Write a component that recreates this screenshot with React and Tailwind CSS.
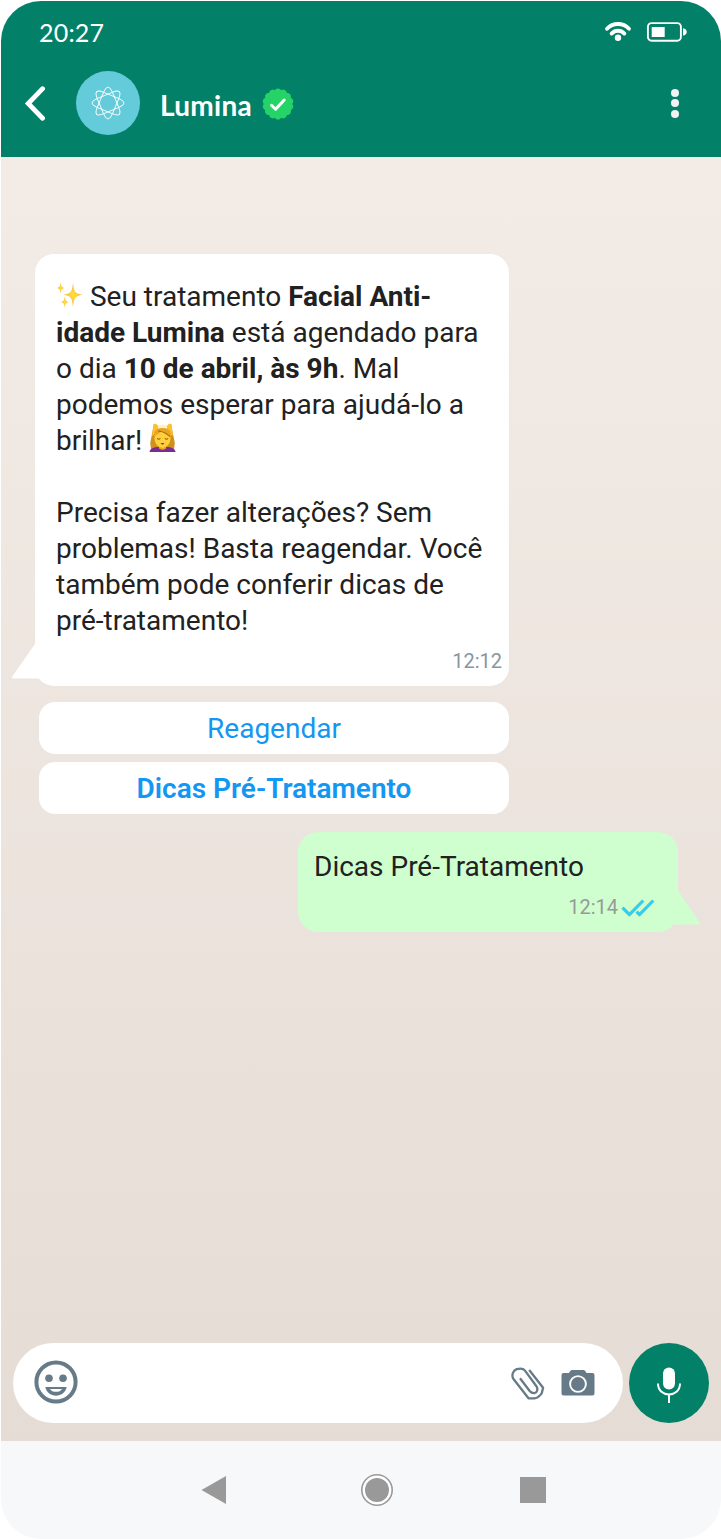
import { clsx } from 'clsx';

const HEADER_BG = 'bg-[#028068]';

const QUICK_REPLIES = [
  { label: 'Reagendar', bold: false },
  { label: 'Dicas Pré-Tratamento', bold: true },
];

function WifiIcon() {
  return (
    <svg width="28" height="22" viewBox="0 0 28 22" fill="none" aria-hidden="true">
      <path d="M3 7.800C9 1.400 19 1.400 25 7.800" stroke="white" strokeWidth="3.800" strokeLinecap="round" />
      <path d="M7.600 12.600C11.200 8.800 16.800 8.800 20.400 12.600" stroke="white" strokeWidth="3.800" strokeLinecap="round" />
      <circle cx="14" cy="16.800" r="3.200" fill="white" />
    </svg>
  );
}

function BatteryIcon() {
  return (
    <svg width="42" height="22" viewBox="0 0 42 22" fill="none" aria-hidden="true">
      <rect x="1.900" y="2.100" width="33" height="17.600" rx="3.600" stroke="white" strokeWidth="1.900" />
      <rect x="5.700" y="6" width="13" height="10" fill="white" />
      <path d="M37 7.200c5 .6 5 6.800 0 7.400z" fill="white" />
    </svg>
  );
}

function BackIcon() {
  return (
    <svg width="22" height="36" viewBox="0 0 22 36" fill="none" aria-hidden="true">
      <path d="M18.600 3.700L4.200 18.500L18.600 33.200" stroke="white" strokeWidth="4.800" strokeLinecap="round" strokeLinejoin="miter" />
    </svg>
  );
}

// one petal: rounded tip with straight sides running to the edge midpoints of an 8/3 star
function Logo() {
  return (
    <svg width="34" height="34" viewBox="-17 -17 34 34" fill="none" stroke="white" strokeWidth="0.95" aria-hidden="true">
      {Array.from({ length: 8 }, (_, i) => (
        <path
          key={i}
          d="M-7.600 -3.150L-4.600 -10.500Q0 -21.500 4.600 -10.500L7.600 -3.150"
          transform={`rotate(${i * 45})`}
        />
      ))}
    </svg>
  );
}

function VerifiedBadge() {
  return (
    <svg width="32" height="32" viewBox="-16 -16 32 32" fill="none" aria-hidden="true">
      <g fill="#25d366">
        <circle r="14.300" />
        {Array.from({ length: 14 }, (_, i) => (
          <circle key={i} cy="-12.400" r="3.100" transform={`rotate(${(i * 360) / 14})`} />
        ))}
      </g>
      <path d="M-6.500 1.300l4.100 4L6.200-4" stroke="white" strokeWidth="3" strokeLinecap="round" strokeLinejoin="round" />
    </svg>
  );
}

function SparklesEmoji() {
  return (
    <svg
      className="inline-block align-[-3px]"
      width="27"
      height="28"
      viewBox="0 0 27 28"
      role="img"
      aria-label="✨"
    >
      <defs>
        <radialGradient id="spark">
          <stop offset="0" stopColor="#ffe13a" />
          <stop offset="0.55" stopColor="#fcc93e" />
          <stop offset="1" stopColor="#f6a33c" />
        </radialGradient>
      </defs>
      <g fill="url(#spark)">
        <path d="M17 2C18 10 18.600 12.600 26.500 13.800C18.600 15 18 17.600 17 26C16 17.600 15.400 15 7.500 13.800C15.400 12.600 16 10 17 2Z" />
        <path d="M4.600 1C5 5 5.600 6.300 8.500 7C5.600 7.700 5 9 4.600 13C4.200 9 3.600 7.700 .8 7C3.600 6.300 4.200 5 4.600 1Z" />
        <path d="M8.700 15C9.100 19 9.700 20.400 12.600 21C9.700 21.700 9.100 23 8.700 27C8.300 23 7.700 21.700 4.800 21C7.700 20.400 8.300 19 8.700 15Z" />
      </g>
    </svg>
  );
}

function MassageEmoji() {
  return (
    <svg
      className="inline-block align-[-2px]"
      width="27"
      height="29"
      viewBox="0 0 27 29"
      role="img"
      aria-label="💆"
    >
      <path d="M5 1L9 7H18L22 1L25.800 20L25 26H2L1.200 20Z" fill="#d0911c" />
      <path d="M4.500 1C7 .3 9 1.500 9.500 5L8 10L3 13ZM22.500 1C20 .3 18 1.500 17.500 5L19 10L24 13Z" fill="#fbc02d" />
      <path d="M9 2.500Q13.500.500 18 2.500V7H9Z" fill="#fff0c4" />
      <path d="M.5 29C1 25.500 4.500 24 9.500 24H17.500C22.500 24 26 25.500 26.500 29Z" fill="#7b2c8f" />
      <path d="M10 22H17V25.500Q13.500 28 10 25.500Z" fill="#e8a91f" />
      <ellipse cx="13.500" cy="15.500" rx="8" ry="9.200" fill="#ffcf3d" />
      <path d="M5 14C4.500 7 9 4.500 13.500 5C19 4.500 23 8 22 15C20 13.500 16 11.500 13 7.500C11.500 10.500 7 11 5 14Z" fill="#e9a520" />
      <path d="M9 8C13 8 18 10.500 21 13.500" stroke="#8a5a12" strokeWidth="0.900" fill="none" />
      <path d="M8 15.500Q9.700 17 11.400 15.500M15.800 15.500Q17.500 17 19.200 15.500" stroke="#7a4c10" strokeWidth="1" fill="none" />
      <path d="M11.500 20.500Q13.500 19.300 15.500 20.500Q13.500 22.700 11.500 20.500Z" fill="#7a3408" />
    </svg>
  );
}

function DoubleCheck() {
  return (
    <svg width="34" height="18" viewBox="0 0 34 18" fill="none" stroke="#34cdec" strokeWidth="3.200" aria-hidden="true">
      <path d="M1.500 8.700L8.400 15.700L22.300 1.500" strokeLinejoin="round" />
      <path d="M15.600 12.700L18.500 15.700L32.300 1.500" strokeLinejoin="round" />
    </svg>
  );
}

function SmileIcon() {
  return (
    <svg className="-mt-[3px]" width="44" height="44" viewBox="0 0 44 44" fill="none" aria-hidden="true">
      <circle cx="22" cy="22" r="19.600" stroke="#667a87" strokeWidth="4" />
      <circle cx="15" cy="18.300" r="3.800" fill="#667a87" />
      <circle cx="29" cy="18.300" r="3.800" fill="#667a87" />
      <path d="M11.300 27H32.700C30.500 38.500 13.500 38.500 11.300 27ZM16 29C18 32.800 26 32.800 28 29Z" fill="#667a87" fillRule="evenodd" />
    </svg>
  );
}

function ClipIcon() {
  return (
    <svg width="34" height="34" viewBox="0 0 34 34" fill="none" stroke="#667a87" strokeWidth="2.300" strokeLinejoin="round" aria-hidden="true">
      <path d="M18.200 4L32.100 21.800L30.700 27.400Q27 32.300 23.500 32.300H17.500L2.300 12.700C.3 9 2 4.500 5.700 3.200C9 2.300 12.200 2.300 14 4.600L25.400 20.200C27.200 23 26.300 26.600 23.500 27.100C21.300 27.300 20 26.600 18.700 25L9 12.300" />
    </svg>
  );
}

function CameraIcon() {
  return (
    <svg width="34" height="28" viewBox="0 0 34 28" fill="none" aria-hidden="true">
      <path d="M2.500 4H8C9 1.500 10.500 1 12 1H21.500C23 1 24.500 1.500 25.500 4H31.500Q33.500 4 33.500 6V24.500Q33.500 26.500 31.500 26.500H2.500Q.5 26.500 .5 24.500V6Q.5 4 2.500 4Z" fill="#667a87" />
      <circle cx="17" cy="15" r="7.900" stroke="white" strokeWidth="1.900" />
    </svg>
  );
}

function MicIcon() {
  return (
    <svg className="mt-1 mr-px" width="26" height="38" viewBox="0 0 26 38" fill="none" aria-hidden="true">
      <rect x="7" y="1.500" width="12" height="22" rx="6" fill="white" />
      <path d="M2 17.500C2 32 24 32 24 17.500M13 28V37" stroke="white" strokeWidth="2" />
    </svg>
  );
}

function Header() {
  return (
    <header className={clsx('h-[156px] shrink-0 text-white', HEADER_BG)}>
      <div className="flex h-[62px] items-center justify-between pl-[38px] pr-[33px]">
        <span className="font-['Lato'] text-[25px] leading-8 tracking-[0.2px]">20:27</span>
        <div className="flex items-center gap-[14px]">
          <WifiIcon />
          <BatteryIcon />
        </div>
      </div>
      <div className="-mt-px flex h-[82px] items-center pl-[23px] pr-[42px]">
        <BackIcon />
        <div className="ml-[30px] flex size-16 items-center justify-center rounded-full bg-[#64cbda]">
          <Logo />
        </div>
        <h1 className="ml-5 mt-1 font-['Lato'] text-[28px] leading-9 font-bold tracking-[0.3px]">Lumina</h1>
        <div className="ml-[10px] mt-[2px]">
          <VerifiedBadge />
        </div>
        <div className="ml-auto flex flex-col gap-[2.500px]">
          <span className="size-2 rounded-full bg-[#f2f2f2]" />
          <span className="size-2 rounded-full bg-[#f2f2f2]" />
          <span className="size-2 rounded-full bg-[#f2f2f2]" />
        </div>
      </div>
    </header>
  );
}

function IncomingMessage() {
  return (
    <div className="relative ml-[34px] mt-[97px] h-[432px] w-[474px] rounded-[19px] bg-white pl-[21px] pt-[25px] text-[#212121]">
      <svg className="absolute -left-[23px] bottom-[7px]" width="32" height="35" viewBox="0 0 32 35" fill="white" aria-hidden="true">
        <path d="M23 0L.4 32.300Q-.5 34.500 2 34.500H32V0Z" />
      </svg>
      <div className="relative whitespace-nowrap text-[28px] leading-9">
        <p>
          <SparklesEmoji /> Seu tratamento <b>Facial Anti-</b>
          <br />
          <b>idade Lumina</b> está agendado para
          <br />o dia <b>10 de abril, às 9h</b>. Mal
          <br />
          podemos esperar para ajudá-lo a
          <br />
          brilhar! <MassageEmoji />
        </p>
        <p className="mt-9">
          Precisa fazer alterações? Sem
          <br />
          problemas! Basta reagendar. Você
          <br />
          também pode conferir dicas de
          <br />
          pré-tratamento!
        </p>
      </div>
      <div className="pr-[7px] pt-[10px] text-right text-[20px] leading-6 text-[#8696a0]">12:12</div>
    </div>
  );
}

function QuickReplies() {
  return (
    <div className="ml-[38px] mt-4 flex w-[470px] flex-col gap-2">
      {QUICK_REPLIES.map(({ label, bold }) => (
        <button
          key={label}
          type="button"
          className={clsx(
            'h-[52px] rounded-[16px] bg-white pt-[2px] text-[28px] leading-9 text-[#1496f3]',
            bold && 'font-semibold',
          )}
        >
          {label}
        </button>
      ))}
    </div>
  );
}

function OutgoingMessage() {
  return (
    <div className="relative ml-[297px] mt-[18px] h-[100px] w-[380px] rounded-[20px] bg-[#cffecf] pl-4 pr-[23px] pt-[17px]">
      <svg className="absolute -right-[22px] bottom-[7px]" width="32" height="35" viewBox="0 0 32 35" fill="#cffecf" aria-hidden="true">
        <path d="M9.800 0L31.600 32.300Q32.500 34.500 30 34.500H0V0Z" />
      </svg>
      <p className="relative text-[28px] leading-9 text-[#212121]">Dicas Pré-Tratamento</p>
      <div className="relative mt-[10px] flex items-center justify-end gap-[3px] text-[20px] leading-6 text-[#999]">
        12:14
        <span className="mt-[2px]">
          <DoubleCheck />
        </span>
      </div>
    </div>
  );
}

function Composer() {
  return (
    <div className="mt-auto mb-[18px] ml-3 flex h-20 gap-[6px]">
      <div className="flex w-[610px] items-center rounded-full bg-white pl-[21px] pr-7">
        <SmileIcon />
        <div className="ml-auto flex items-center gap-4">
          <ClipIcon />
          <CameraIcon />
        </div>
      </div>
      <div className={clsx('flex size-20 items-center justify-center rounded-full', HEADER_BG)}>
        <MicIcon />
      </div>
    </div>
  );
}

function NavBar() {
  return (
    <nav className="flex h-[98px] shrink-0 items-center pl-[200px] bg-[#f7f8fa]">
      <svg width="26" height="28" viewBox="0 0 26 28" fill="#999" aria-hidden="true">
        <path d="M25 0V28L.5 14Z" />
      </svg>
      <svg className="ml-[133px]" width="34" height="34" viewBox="0 0 34 34" aria-hidden="true">
        <circle cx="17" cy="17" r="15.200" fill="white" stroke="#999" strokeWidth="1.600" />
        <circle cx="17" cy="17" r="12" fill="#999" />
      </svg>
      <div className="ml-[126px] size-[26px] bg-[#999]" />
    </nav>
  );
}

export default function App() {
  return (
    <div className="h-[1539px] w-[721px] bg-white pl-px pt-px font-['Roboto',sans-serif]">
      <div className="flex h-[1538px] w-[720px] flex-col overflow-hidden rounded-[40px]">
        <Header />
        <main className="flex flex-1 flex-col bg-linear-to-b from-[#f3ece6] to-[#e5dcd5]">
          <IncomingMessage />
          <QuickReplies />
          <OutgoingMessage />
          <Composer />
        </main>
        <NavBar />
      </div>
    </div>
  );
}
